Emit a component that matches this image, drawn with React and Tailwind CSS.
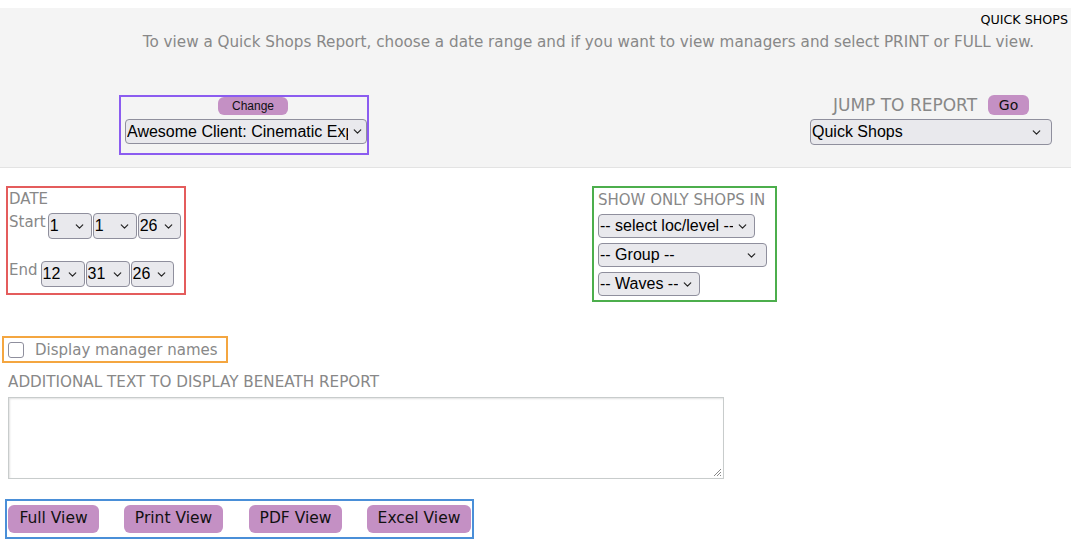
import { ChevronDown } from 'lucide-react';

const SANS = { fontFamily: '"DejaVu Sans", sans-serif' };

function FakeSelect({ value, className = '', textClass = '' }) {
  return (
    <div
      className={`flex items-center justify-between rounded-[4px] border border-[#8f8f9d] bg-[#e9e9ed] pl-[1px] pr-[5px] text-[16px] text-black font-['Liberation_Sans',Arial,sans-serif] ${className}`}
    >
      <span className={`whitespace-nowrap overflow-hidden ${textClass}`}>{value}</span>
      <ChevronDown size={13} strokeWidth={2.2} className="shrink-0 ml-[3px] text-[#222]" />
    </div>
  );
}

function PurpleButton({ children, className = '' }) {
  return (
    <button className={`bg-[#c490c4] text-[#111] rounded-[6px] leading-none ${className}`}>{children}</button>
  );
}

export default function App() {
  return (
    <div className="min-h-[544px] bg-white pt-[8px] text-[#888]" style={SANS}>
      <div className="bg-[#f4f4f4] h-[160px] border-b border-[#e3e3e3] pt-[4px]">
        <div className="text-right pr-[3px] text-[12.7px] leading-[15px] text-black">QUICK SHOPS</div>
        <div className="text-right pr-[37px] text-[15.2px] leading-[19px] mt-[6px]">
          To view a Quick Shops Report, choose a date range and if you want to view managers and select PRINT or FULL view.
        </div>
        <div className="flex justify-between items-start mt-[43px]">
          <div className="ml-[119px] w-[250px] h-[60px] border-2 border-[#8b5cf0] flex flex-col items-start">
            <PurpleButton className="ml-[97px] w-[70px] h-[18px] text-[12px] font-['Liberation_Sans',Arial,sans-serif]">Change</PurpleButton>
            <FakeSelect
              value="Awesome Client: Cinematic Experience"
              className="ml-[4px] w-[242px] h-[25px] mt-[4px]"
              textClass="w-[221px] shrink-0"
            />
          </div>
          <div className="mr-[19px] w-[242px] flex flex-col items-center">
            <div className="flex items-center">
              <span className="text-[17px] leading-[20px]">JUMP TO REPORT</span>
              <PurpleButton className="ml-[11px] w-[41px] h-[20px] text-[14px]">Go</PurpleButton>
            </div>
            <FakeSelect value="Quick Shops" className="w-[242px] h-[26px] mt-[4px] pr-[8px]" />
          </div>
        </div>
      </div>

      <div className="flex items-start mt-[18px]">
        <div className="ml-[6px] w-[180px] h-[109px] border-2 border-[#e45c5c] pl-[1px]">
          <div className="text-[15px] leading-[20px] mt-[1px]">DATE</div>
          <div className="flex items-start mt-[3px]">
            <span className="text-[15px] leading-[20px] mr-[2px]">Start</span>
            <div className="flex gap-[1px] mt-[1px]">
              <FakeSelect value="1" className="w-[44px] h-[26px]" />
              <FakeSelect value="1" className="w-[44px] h-[26px]" />
              <FakeSelect value="26" className="w-[43px] h-[26px]" />
            </div>
          </div>
          <div className="flex items-start mt-[21px]">
            <span className="text-[15px] leading-[20px] mr-[3px]">End</span>
            <div className="flex gap-[1px] mt-[1px]">
              <FakeSelect value="12" className="w-[44px] h-[26px]" />
              <FakeSelect value="31" className="w-[44px] h-[26px]" />
              <FakeSelect value="26" className="w-[43px] h-[26px]" />
            </div>
          </div>
        </div>

        <div className="ml-[406px] w-[185px] h-[116px] border-2 border-[#4cae4c] pl-[4px]">
          <div className="text-[15px] leading-[20px] mt-[2px]">SHOW ONLY SHOPS IN</div>
          <div className="flex flex-col items-start gap-[5px] mt-[4px]">
            <FakeSelect value="-- select loc/level --" className="w-[157px] h-[24px]" />
            <FakeSelect value="-- Group --" className="w-[169px] h-[24px] pr-[8px]" />
            <FakeSelect value="-- Waves --" className="w-[102px] h-[24px]" />
          </div>
        </div>
      </div>

      <div className="mt-[34px] ml-[2px] w-[226px] h-[27px] border-2 border-[#f4a640] flex items-center">
        <span className="ml-[4px] w-[16px] h-[16px] rounded-[3px] border border-[#8f8f9d] bg-white" />
        <span className="ml-[11px] text-[15px] leading-[20px]">Display manager names</span>
      </div>

      <div className="ml-[8px] mt-[10px] text-[15.2px] leading-[19px]">ADDITIONAL TEXT TO DISPLAY BENEATH REPORT</div>
      <div className="ml-[8px] mt-[5px] w-[716px] h-[82px] border border-[#c8cccc] shadow-[inset_1px_1px_2px_rgba(0,0,0,0.12)] bg-white flex items-end justify-end">
        <svg width="9" height="9" viewBox="0 0 9 9" className="mr-[1px] mb-[1px]">
          <path d="M8 1L1 8M8 4L4 8M8 7L7 8" stroke="#888" strokeWidth="1" />
        </svg>
      </div>

      <div className="mt-[20px] ml-[5px] w-[469px] h-[40px] border-2 border-[#4a8fd8] flex items-center pl-[1px]">
        <PurpleButton className="w-[91px] h-[28px] text-[15.5px]">Full View</PurpleButton>
        <PurpleButton className="ml-[25px] w-[99px] h-[28px] text-[15.5px]">Print View</PurpleButton>
        <PurpleButton className="ml-[26px] w-[93px] h-[28px] text-[15.5px]">PDF View</PurpleButton>
        <PurpleButton className="ml-[25px] w-[104px] h-[28px] text-[15.5px]">Excel View</PurpleButton>
      </div>
    </div>
  );
}
